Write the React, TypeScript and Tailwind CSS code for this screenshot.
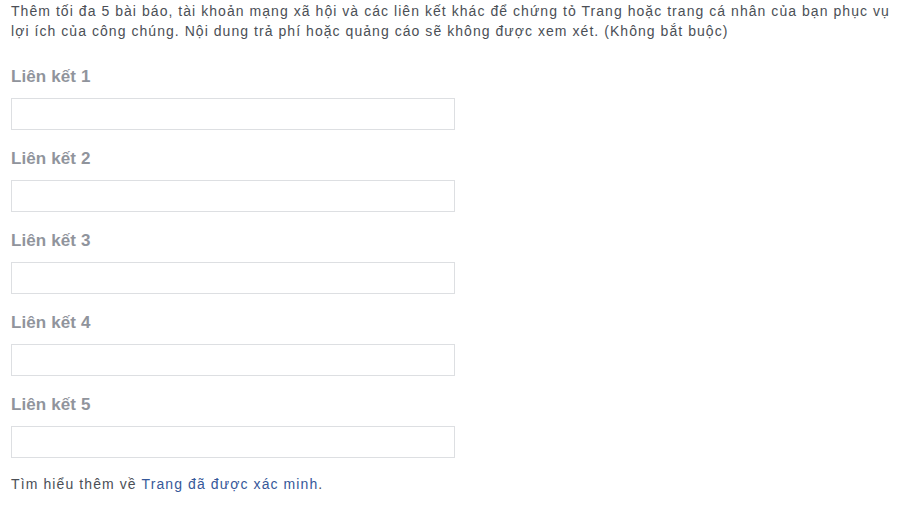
import React from 'react'

const links = [1, 2, 3, 4, 5]

export default function App() {
  return (
    <div className="w-[900px] h-[511px] bg-white pl-[11px] pt-[1px] font-['Liberation_Sans',Arial,sans-serif] text-[14px] text-[#4b4f56]">
      {/* Intro */}
      <p className="leading-[20px] tracking-[1.05px]">
        Thêm tối đa 5 bài báo, tài khoản mạng xã hội và các liên kết khác để chứng tỏ Trang hoặc trang cá nhân của bạn phục vụ lợi ích của công chúng. Nội dung trả phí hoặc quảng cáo sẽ không được xem xét. (Không bắt buộc)
      </p>

      {/* Link fields */}
      <div className="mt-[26px] flex flex-col gap-[19px]">
        {links.map((n) => (
          <div key={n} className="flex flex-col gap-[11px]">
            <label className="text-[17px] leading-[20px] font-bold tracking-[0.1px] text-[#90949c]">Liên kết {n}</label>
            <input
              type="text"
              className="w-[444px] h-[32px] border border-[#dddfe2] bg-white px-2 outline-none"
            />
          </div>
        ))}
      </div>

      {/* Footer */}
      <p className="mt-[15px] leading-[22px] tracking-[1.1px]">
        Tìm hiểu thêm về <a href="#" className="text-[#365899]">Trang đã được xác minh</a>.
      </p>
    </div>
  )
}
